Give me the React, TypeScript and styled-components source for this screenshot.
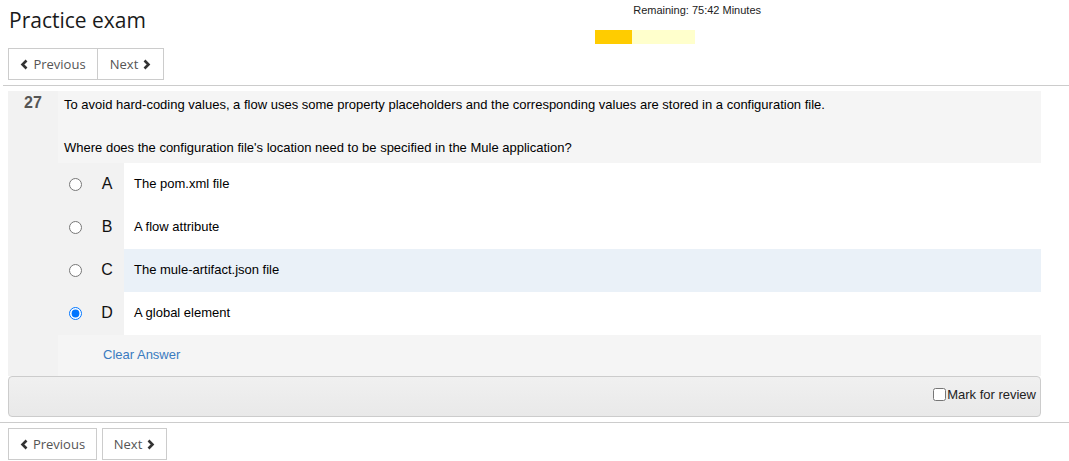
import React from "react";
import styled, { createGlobalStyle } from "styled-components";

const Global = createGlobalStyle`
  html, body { margin: 0; padding: 0; background: #fff; }
  body { font-family: "Liberation Sans", Arial, sans-serif; font-size: 13px; color: #000; }
`;

const Page = styled.div`
  width: 1069px;
`;

const Header = styled.div`
  display: flex;
  align-items: flex-start;
  padding-left: 9px;
  height: 48px;
`;

const Title = styled.h1`
  margin: 0;
  padding-top: 5px;
  font-family: "Open Sans", sans-serif;
  font-weight: 400;
  font-size: 21px;
  line-height: 30px;
  color: #1a1a1a;
  width: 586px;
`;

const Timer = styled.div`
  width: 166px;
  display: flex;
  flex-direction: column;
  padding-top: 3px;
`;

const TimerText = styled.div`
  text-align: right;
  font-size: 11px;
  line-height: 14px;
  color: #222;
`;

const Bar = styled.div`
  margin-top: 13px;
  width: 100px;
  height: 14px;
  background: #ffffcc;
  display: flex;
`;

const BarFill = styled.div`
  height: 100%;
  background: #ffcc00;
`;

const NavRow = styled.div<{ $split?: boolean }>`
  display: flex;
  gap: ${(p) => (p.$split ? "5px" : "0")};
  padding-left: 8px;
`;

const NavButton = styled.button<{ $joined?: boolean }>`
  height: 32px;
  box-sizing: border-box;
  border: 1px solid #ccc;
  background: #fff;
  font-family: "Open Sans", sans-serif;
  font-size: 13px;
  color: #555;
  display: inline-flex;
  align-items: center;
  justify-content: center;
  gap: 4px;
  padding: 0;
  margin: 0;
  ${(p) => (p.$joined ? "margin-left: -1px;" : "")}
`;

const Chevron = ({ dir }: { dir: "left" | "right" }) => (
  <svg width="9" height="11" viewBox="0 0 9 11" aria-hidden="true">
    <polyline
      points={dir === "left" ? "6.5,1.5 2.5,5.5 6.5,9.5" : "2.5,1.5 6.5,5.5 2.5,9.5"}
      fill="none"
      stroke="#333"
      strokeWidth="2.6"
      strokeLinecap="butt"
      strokeLinejoin="miter"
    />
  </svg>
);

const Rule = styled.div<{ $left: number }>`
  height: 1px;
  background: #ccc;
  margin-left: ${(p) => p.$left}px;
`;

const Question = styled.div`
  margin: 5px 0 0 8px;
  width: 1033px;
  display: grid;
  grid-template-columns: 50px 983px;
`;

const Num = styled.div`
  background: #f2f2f2;
  font-weight: 700;
  font-size: 16px;
  color: #555;
  text-align: center;
  padding-top: 3px;
  line-height: 18px;
`;

const Body = styled.div`
  display: flex;
  flex-direction: column;
`;

const Stem = styled.div`
  background: #f5f5f5;
  padding: 5px 6px 7px;
  p { margin: 0; line-height: 17px; }
  p + p { margin-top: 26px; }
`;

const Option = styled.label`
  display: grid;
  grid-template-columns: 66px 1fr;
  height: 43px;
  cursor: pointer;
`;

const Marker = styled.div`
  background: #f2f2f2;
  display: flex;
  align-items: center;
  input { margin: 0 0 0 11px; width: 13px; height: 13px; }
`;

const Letter = styled.span`
  font-size: 16px;
  margin-left: 19px;
  width: 12px;
  text-align: center;
  color: #111;
  padding-bottom: 1px;
`;

const OptionText = styled.div<{ $hover?: boolean }>`
  background: ${(p) => (p.$hover ? "#eaf1f8" : "#fff")};
  display: flex;
  align-items: center;
  padding: 0 0 2px 10px;
`;

const ClearRow = styled.div`
  background: #f5f5f5;
  height: 41px;
  display: flex;
  align-items: center;
  padding: 0 0 2px 45px;
  box-sizing: border-box;
`;

const ClearLink = styled.a`
  color: #3a7bbf;
  text-decoration: none;
`;

const Footer = styled.div`
  margin-left: 8px;
  width: 1033px;
  height: 41px;
  box-sizing: border-box;
  border: 1px solid #ccc;
  border-radius: 4px;
  background: linear-gradient(#f0f0f0, #e9e9e9);
  display: flex;
  align-items: center;
  justify-content: flex-end;
  padding: 0 4px 4px 0;
`;

const Review = styled.label`
  display: flex;
  align-items: center;
  color: #222;
  input { margin: 0 1px 0 0; width: 13px; height: 13px; }
`;

const options = [
  { k: "A", t: "The pom.xml file" },
  { k: "B", t: "A flow attribute" },
  { k: "C", t: "The mule-artifact.json file", hover: true },
  { k: "D", t: "A global element", checked: true },
];

export default function App() {
  return (
    <Page>
      <Global />
      <Header>
        <Title>Practice exam</Title>
        <Timer>
          <TimerText>Remaining: 75:42 Minutes</TimerText>
          <Bar>
            <BarFill style={{ width: "37%" }} />
          </Bar>
        </Timer>
      </Header>
      <NavRow>
        <NavButton style={{ width: 90 }}>
          <Chevron dir="left" /> Previous
        </NavButton>
        <NavButton $joined style={{ width: 67 }}>
          Next <Chevron dir="right" />
        </NavButton>
      </NavRow>
      <Rule $left={3} style={{ marginTop: 5 }} />
      <Question>
        <Num>27</Num>
        <Body>
          <Stem>
            <p>
              To avoid hard-coding values, a flow uses some property placeholders and the corresponding values are
              stored in a configuration file.
            </p>
            <p>Where does the configuration file's location need to be specified in the Mule application?</p>
          </Stem>
          {options.map((o) => (
            <Option key={o.k}>
              <Marker>
                <input type="radio" name="q27" defaultChecked={o.checked} />
                <Letter>{o.k}</Letter>
              </Marker>
              <OptionText $hover={o.hover}>{o.t}</OptionText>
            </Option>
          ))}
          <ClearRow>
            <ClearLink href="#">Clear Answer</ClearLink>
          </ClearRow>
        </Body>
      </Question>
      <Footer>
        <Review>
          <input type="checkbox" />
          Mark for review
        </Review>
      </Footer>
      <Rule $left={0} style={{ marginTop: 5 }} />
      <NavRow $split style={{ marginTop: 5 }}>
        <NavButton style={{ width: 89 }}>
          <Chevron dir="left" /> Previous
        </NavButton>
        <NavButton style={{ width: 65 }}>
          Next <Chevron dir="right" />
        </NavButton>
      </NavRow>
    </Page>
  );
}
